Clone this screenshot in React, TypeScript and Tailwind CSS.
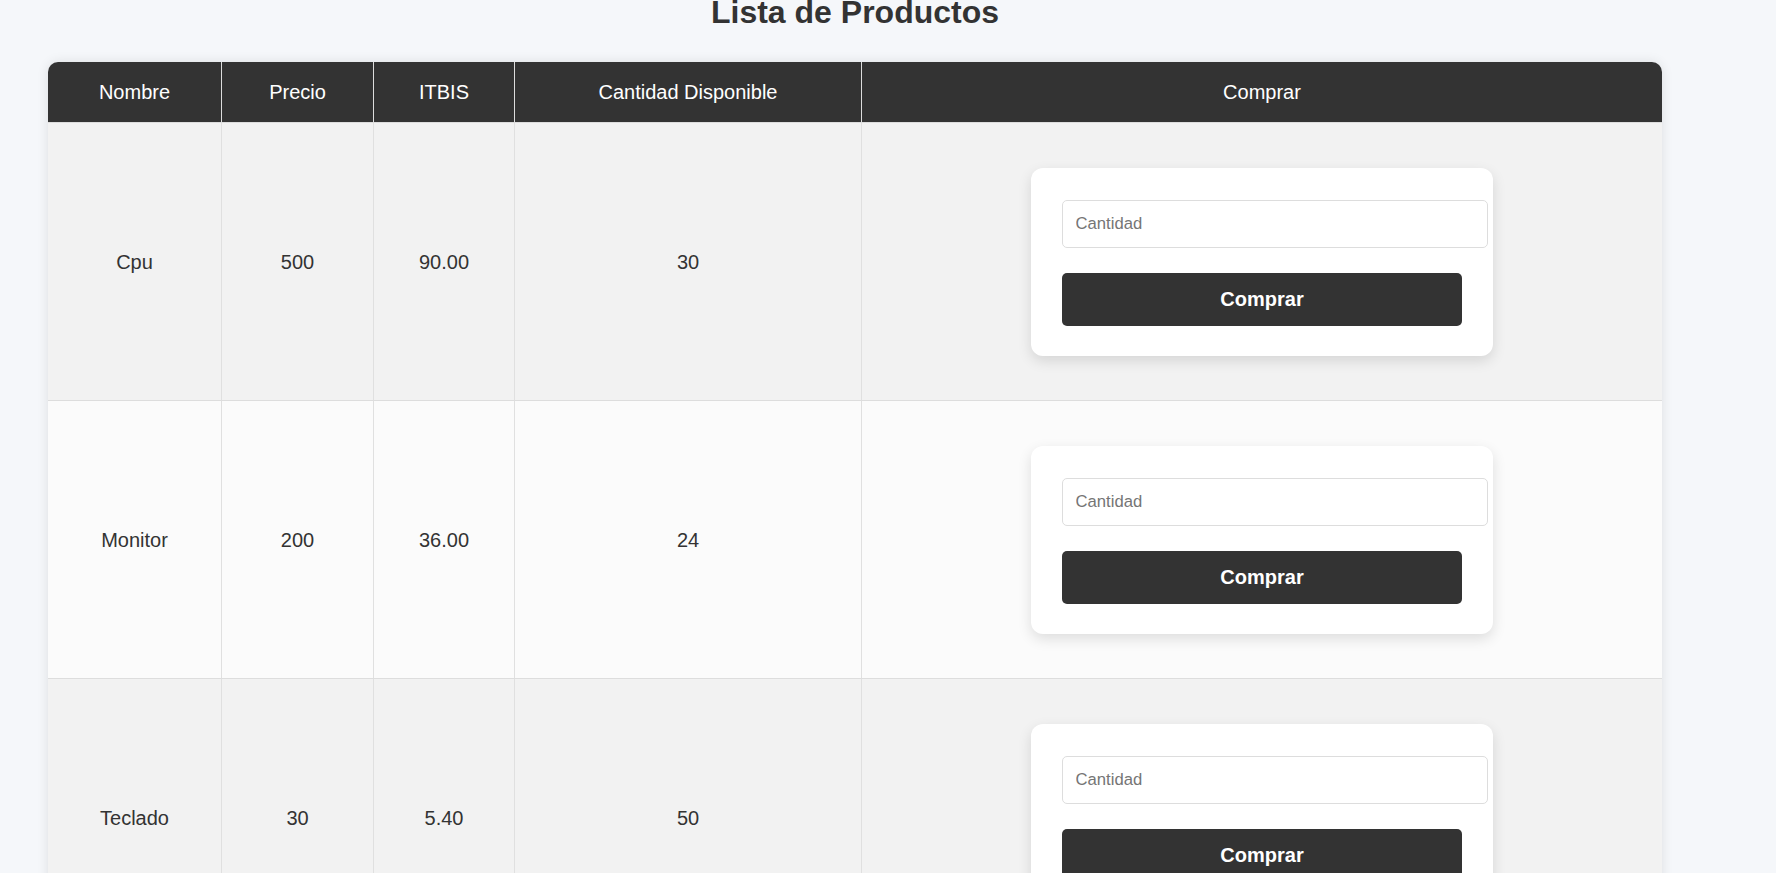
import React from "react";

const rows = [
  { nombre: "Cpu", precio: "500", itbis: "90.00", cantidad: "30", bg: "bg-[#f2f2f2]" },
  { nombre: "Monitor", precio: "200", itbis: "36.00", cantidad: "24", bg: "bg-[#fbfbfb]" },
  { nombre: "Teclado", precio: "30", itbis: "5.40", cantidad: "50", bg: "bg-[#f2f2f2]" },
];

const headers = ["Nombre", "Precio", "ITBIS", "Cantidad Disponible", "Comprar"];

export default function App() {
  return (
    <div
      className="min-h-screen w-full overflow-hidden bg-[#f5f7fa] text-[#333333]"
      style={{ fontFamily: '"Liberation Sans", Arial, sans-serif' }}
    >
      <div className="ml-[48px] w-[1614px]">
        <h1 className="mt-[-6px] mb-[31px] text-center text-[32px] font-bold leading-[37px] text-[#333333]">
          Lista de Productos
        </h1>
        <div className="overflow-hidden rounded-t-[10px] shadow-[0_0_12px_rgba(0,0,0,0.1)]">
          <div className="grid grid-cols-[174px_152px_141px_347px_800px] bg-[#333333]">
            {headers.map((h, i) => (
              <div
                key={h}
                className={`flex h-[61px] items-center justify-center border-b border-[#dddddd] text-[20px] text-white ${
                  i < headers.length - 1 ? "border-r" : ""
                }`}
              >
                {h}
              </div>
            ))}
          </div>
          {rows.map((r) => (
            <div
              key={r.nombre}
              className={`grid grid-cols-[174px_152px_141px_347px_800px] border-b border-[#dddddd] ${r.bg}`}
            >
              <div className="flex h-[277px] items-center justify-center border-r border-[#e0e0e0] text-[20px]">
                {r.nombre}
              </div>
              <div className="flex items-center justify-center border-r border-[#e0e0e0] text-[20px]">
                {r.precio}
              </div>
              <div className="flex items-center justify-center border-r border-[#e0e0e0] text-[20px]">
                {r.itbis}
              </div>
              <div className="flex items-center justify-center border-r border-[#e0e0e0] text-[20px]">
                {r.cantidad}
              </div>
              <div className="flex items-center justify-center">
                <div className="flex w-[462px] flex-col rounded-[12px] bg-white pt-[32px] pr-[31px] pb-[30px] pl-[31px] shadow-[0_5px_14px_rgba(0,0,0,0.12)]">
                  <input
                    type="number"
                    placeholder="Cantidad"
                    className="box-border h-[48px] w-[426px] rounded-[5px] border border-[#dddddd] bg-white px-[12.5px] text-[16.67px] text-[#333333] placeholder:text-[#757575] outline-none"
                  />
                  <button className="mt-[25px] h-[53px] w-[400px] rounded-[5px] bg-[#333333] text-[20px] font-bold text-white">
                    Comprar
                  </button>
                </div>
              </div>
            </div>
          ))}
        </div>
      </div>
    </div>
  );
}
